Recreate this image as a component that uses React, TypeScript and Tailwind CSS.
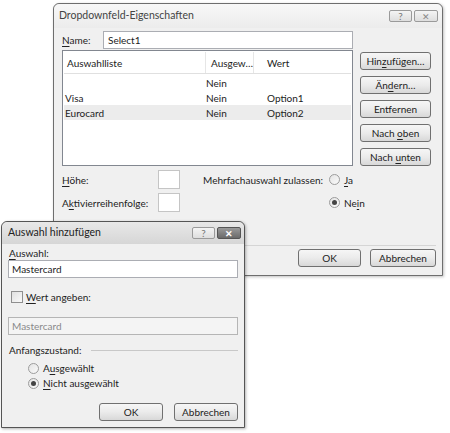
import React from "react";

const font = { fontFamily: 'Lato, "Open Sans", sans-serif' };

function U({ children }: { children: React.ReactNode }) {
  return <span className="underline underline-offset-[1.5px]">{children}</span>;
}

function Btn({ children, className = "" }: { children: React.ReactNode; className?: string }) {
  return (
    <div
      className={`flex items-center justify-center h-[18px] rounded-[3px] border border-[#707070] bg-gradient-to-b from-[#f6f6f6] via-[#ebebeb] to-[#d8d8d8] text-[10px] leading-[14px] text-[#222] ${className}`}
    >
      <span>{children}</span>
    </div>
  );
}

function TitleButtons({ active }: { active?: boolean }) {
  return (
    <div className="flex gap-[2px]">
      <div className="w-[23px] h-[12px] rounded-[2px] border border-[#9a9a9a] bg-gradient-to-b from-[#f4f4f4] to-[#dedede] flex items-center justify-center text-[10px] leading-none text-[#777]">
        ?
      </div>
      <div
        className={`w-[24px] h-[12px] rounded-[2px] border flex items-center justify-center text-[9px] leading-none ${
          active
            ? "border-[#555] bg-gradient-to-b from-[#9a9a9a] to-[#6a6a6a] text-white font-bold"
            : "border-[#9a9a9a] bg-gradient-to-b from-[#f4f4f4] to-[#dedede] text-[#888]"
        }`}
      >
        ✕
      </div>
    </div>
  );
}

function Radio({ checked }: { checked?: boolean }) {
  return (
    <div className="w-[11px] h-[11px] rounded-full border border-[#9c9c9c] bg-gradient-to-br from-[#e4e4e4] to-[#fafafa] flex items-center justify-center">
      {checked && <div className="w-[5px] h-[5px] rounded-full bg-[#444]" />}
    </div>
  );
}

const row = "grid grid-cols-[141px_48px_1fr] h-[15px] items-center";

function MainDialog() {
  return (
    <div className="absolute left-[53px] top-[3px] w-[390px] h-[273px] border border-[#6e6e6e] rounded-t-[6px] bg-[#f0f0f0] shadow-[1px_1px_3px_rgba(0,0,0,0.25)] flex flex-col">
      <div className="h-[24px] shrink-0 flex items-center justify-between pl-[5px] pr-[4px] rounded-t-[6px] bg-gradient-to-b from-[#f8f8f8] to-[#ececec]">
        <span className="text-[10.5px] text-[#444]">Dropdownfeld-Eigenschaften</span>
        <TitleButtons />
      </div>
      <div className="flex flex-col pl-[8px] pr-[5px] text-[10px] leading-[14px] text-[#222]">
        <div className="flex items-center mt-[3px] h-[18px]">
          <span className="w-[41px]">
            <U>N</U>ame:
          </span>
          <div className="w-[250px] h-[18px] border border-[#abadb3] bg-white pl-[4px] flex items-center">Select1</div>
        </div>
        <div className="flex mt-[1px]">
          <div className="w-[291px] h-[116px] border border-[#828790] bg-white p-[1px] flex flex-col">
            <div className="grid grid-cols-[141px_48px_1fr] h-[22px] border-b border-[#e0e0e0] items-center">
              <span className="pl-[3px]">Auswahlliste</span>
              <span className="h-full flex items-center pl-[5px] border-l border-[#e6e6e6]">Ausgew…</span>
              <span className="h-full flex items-center pl-[13px] border-l border-[#e6e6e6]">Wert</span>
            </div>
            <div className={`${row} mt-[1px]`}>
              <span />
              <span className="pl-[1px]">Nein</span>
              <span />
            </div>
            <div className={row}>
              <span className="pl-[1px]">Visa</span>
              <span className="pl-[1px]">Nein</span>
              <span className="pl-[14px]">Option1</span>
            </div>
            <div className={`${row} bg-[#ececec]`}>
              <span className="pl-[1px]">Eurocard</span>
              <span className="pl-[1px]">Nein</span>
              <span className="pl-[14px]">Option2</span>
            </div>
          </div>
          <div className="flex flex-col ml-[7px] w-[71px] mt-[2px] gap-[6px]">
            <Btn>
              Hin<U>z</U>ufügen…
            </Btn>
            <Btn>
              Än<U>d</U>ern…
            </Btn>
            <Btn>
              Ent<U>f</U>ernen
            </Btn>
            <Btn>
              Nach <U>o</U>ben
            </Btn>
            <Btn>
              Nach <U>u</U>nten
            </Btn>
          </div>
        </div>
        <div className="flex mt-[4px]">
          <div className="flex flex-col gap-[4px] w-[141px]">
            <div className="flex items-center h-[19px]">
              <span className="w-[96px]">
                <U>H</U>öhe:
              </span>
              <div className="w-[22px] h-[19px] border border-[#c5c5c5] bg-white" />
            </div>
            <div className="flex items-center h-[19px]">
              <span className="w-[96px]">
                A<U>k</U>tivierreihenfolge:
              </span>
              <div className="w-[22px] h-[19px] border border-[#c5c5c5] bg-white" />
            </div>
          </div>
          <div className="flex flex-col gap-[4px]">
            <div className="flex items-center h-[19px]">
              <span className="w-[126px] whitespace-nowrap">Mehrfachauswahl zulassen:</span>
              <Radio />
              <span className="ml-[4px]">
                <U>J</U>a
              </span>
            </div>
            <div className="flex items-center h-[19px]">
              <span className="w-[126px]" />
              <Radio checked />
              <span className="ml-[4px]">
                Ne<U>i</U>n
              </span>
            </div>
          </div>
        </div>
        <div className="mt-[33px] mr-[1px] border-t border-[#d5d5d5]" />
        <div className="flex justify-end gap-[9px] mt-[3px] mr-[1px]">
          <Btn className="w-[63px]">OK</Btn>
          <Btn className="w-[66px]">Abbrechen</Btn>
        </div>
      </div>
    </div>
  );
}

function AddDialog() {
  return (
    <div className="absolute left-[1px] top-[221px] w-[244px] h-[207px] border border-[#555] rounded-t-[6px] bg-[#f0f0f0] shadow-[1px_1px_3px_rgba(0,0,0,0.3)] flex flex-col">
      <div className="h-[22px] shrink-0 flex items-center justify-between pl-[6px] pr-[3px] rounded-t-[6px] bg-gradient-to-b from-[#e8e8e8] to-[#d6d6d6]">
        <span className="text-[10.5px] text-[#222]">Auswahl hinzufügen</span>
        <TitleButtons active />
      </div>
      <div className="flex flex-col px-[6px] text-[10px] leading-[14px] text-[#222]">
        <span className="mt-[2px] pl-[1px]">
          <U>A</U>uswahl:
        </span>
        <div className="h-[18px] border border-[#abadb3] bg-white pl-[3px] flex items-center">Mastercard</div>
        <div className="flex items-center mt-[12px] pl-[3px] h-[14px]">
          <div className="w-[12px] h-[12px] border border-[#8f8f8f] bg-gradient-to-br from-[#e0e0e0] to-[#fafafa]" />
          <span className="ml-[3px]">
            <U>W</U>ert angeben:
          </span>
        </div>
        <div className="h-[18px] mt-[13px] border border-[#b5b5b5] bg-[#f4f4f4] pl-[3px] flex items-center text-[#8a8a8a]">
          Mastercard
        </div>
        <div className="flex items-center mt-[8px] h-[14px]">
          <span className="pl-[1px]">Anfangszustand:</span>
          <div className="flex-1 ml-[10px] border-t border-[#c8c8c8]" />
        </div>
        <div className="flex items-center mt-[4px] pl-[20px] h-[14px]">
          <Radio />
          <span className="ml-[4px]">
            A<U>u</U>sgewählt
          </span>
        </div>
        <div className="flex items-center mt-[1px] pl-[20px] h-[14px]">
          <Radio checked />
          <span className="ml-[4px]">
            <U>N</U>icht ausgewählt
          </span>
        </div>
        <div className="flex justify-end gap-[11px] mt-[13px]">
          <Btn className="w-[64px] h-[17px]">OK</Btn>
          <Btn className="w-[64px] h-[17px]">Abbrechen</Btn>
        </div>
      </div>
    </div>
  );
}

export default function App() {
  return (
    <div className="relative w-[450px] h-[433px] bg-white overflow-hidden" style={font}>
      <MainDialog />
      <AddDialog />
    </div>
  );
}
